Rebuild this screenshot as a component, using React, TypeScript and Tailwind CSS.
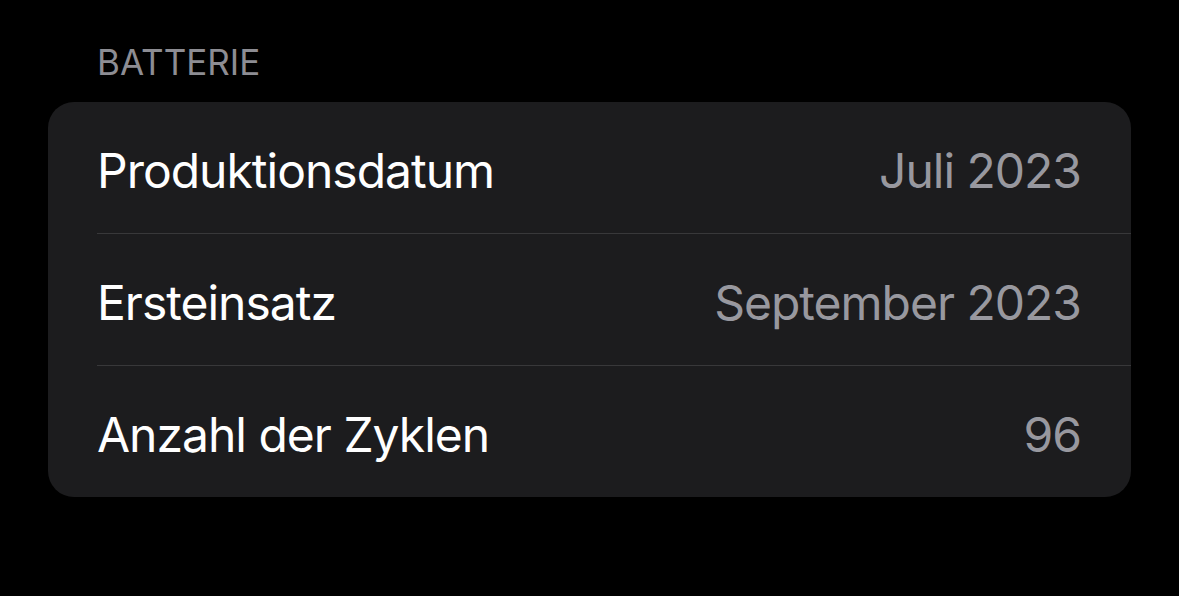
import React from "react";

const rows = [
  { label: "Produktionsdatum", value: "Juli 2023" },
  { label: "Ersteinsatz", value: "September 2023" },
  { label: "Anzahl der Zyklen", value: "96" },
];

export default function App() {
  return (
    <div
      className="w-[1179px] h-[596px] bg-black overflow-hidden"
      style={{ fontFamily: "Inter, 'Noto Sans', sans-serif" }}
    >
      <div className="pt-[40px] pl-[48px] pr-[48px]">
        <div className="pl-[49px] text-[35px] leading-[44px] text-[#8d8d93] tracking-[0px]">BATTERIE</div>
        <div className="mt-[18px] bg-[#1c1c1e] rounded-[26px] overflow-hidden">
          {rows.map((r, i) => (
            <div key={r.label} className="pl-[49px]">
              <div
                className={
                  "flex items-center justify-between pr-[50px] pt-[6px] " +
                  (i < rows.length - 1 ? "h-[132px] border-b border-[#38383a]" : "h-[131px]")
                }
              >
                <span className="text-[48px] text-white leading-none tracking-[-1px]">{r.label}</span>
                <span className="text-[48px] text-[#98989f] leading-none tracking-[-1px]">{r.value}</span>
              </div>
            </div>
          ))}
        </div>
      </div>
    </div>
  );
}
